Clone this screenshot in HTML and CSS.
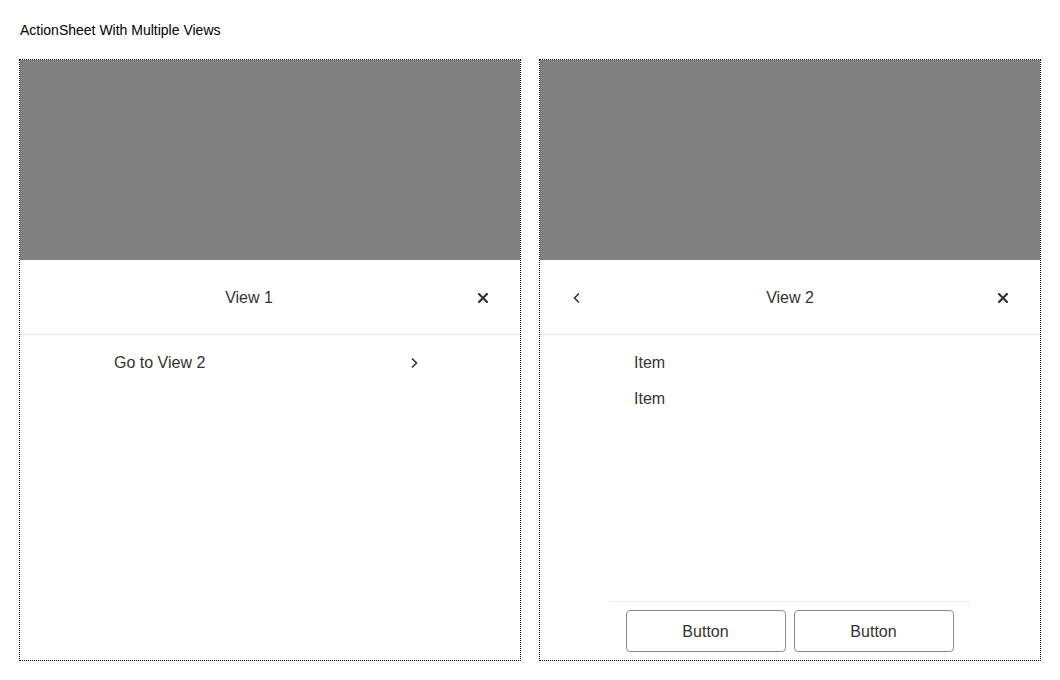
FILE: index.html
```html
<!DOCTYPE html>
<html>
<head>
<meta charset="utf-8">
<link rel="stylesheet" href="styles.css">
</head>
<body>
<div class="page">
  <div class="heading">ActionSheet With Multiple Views</div>
  <div class="panels">
    <div class="panel">
      <div class="backdrop"></div>
      <div class="sheet">
        <div class="sheet-header">
          <div class="title">View 1</div>
          <button class="icon-btn close" aria-label="Close">
            <svg width="10" height="10" viewBox="0 0 10 10"><path d="M1 1L9 9M9 1L1 9" stroke="#333" stroke-width="2.2" stroke-linecap="square"/></svg>
          </button>
        </div>
        <div class="sheet-body">
          <div class="list">
            <div class="row nav-row">
              <span>Go to View 2</span>
              <svg class="chev" width="8" height="12" viewBox="0 0 8 12"><path d="M2 1.5L6.5 6L2 10.5" fill="none" stroke="#333" stroke-width="1.6"/></svg>
            </div>
          </div>
        </div>
      </div>
    </div>
    <div class="panel">
      <div class="backdrop"></div>
      <div class="sheet">
        <div class="sheet-header">
          <button class="icon-btn back" aria-label="Back">
            <svg width="8" height="12" viewBox="0 0 8 12"><path d="M6 1.5L1.5 6L6 10.5" fill="none" stroke="#333" stroke-width="1.6"/></svg>
          </button>
          <div class="title">View 2</div>
          <button class="icon-btn close" aria-label="Close">
            <svg width="10" height="10" viewBox="0 0 10 10"><path d="M1 1L9 9M9 1L1 9" stroke="#333" stroke-width="2.2" stroke-linecap="square"/></svg>
          </button>
        </div>
        <div class="sheet-body">
          <div class="list">
            <div class="row">Item</div>
            <div class="row">Item</div>
          </div>
        </div>
        <div class="sheet-footer">
          <div class="footer-inner">
            <button class="btn">Button</button>
            <button class="btn">Button</button>
          </div>
        </div>
      </div>
    </div>
  </div>
</div>
</body>
</html>
```
FILE: styles.css
```css
* { box-sizing: border-box; }
html, body { margin: 0; padding: 0; background: #fff; }
body { font-family: "Liberation Sans", Arial, sans-serif; color: #333; }
.page { padding: 21px 19px 0 19px; }
.heading { font-size: 14px; color: #000; line-height: 18px; height: 38px; padding-left: 1px; }
.panels { display: flex; gap: 18px; }
.panel {
  width: 502px; height: 602px;
  border: 1px dotted #000;
  display: flex; flex-direction: column;
}
.backdrop { height: 200px; background: #808080; flex: none; }
.sheet { flex: 1; display: flex; flex-direction: column; background: #fff; }
.sheet-header {
  height: 75px; flex: none;
  display: flex; align-items: center;
  padding: 1px 16px 0;
  border-bottom: 1px solid #e6e6e6;
}
.title { flex: 1; text-align: center; font-size: 16px; line-height: 20px; color: #333; padding-top: 1px; }
.icon-btn {
  width: 42px; height: 42px; border: none; background: none; padding: 0;
  display: flex; align-items: center; justify-content: center; flex: none;
}
.sheet-body { flex: 1; }
.list { width: 360px; margin: 0 auto; padding-top: 10px; }
.row {
  height: 36px; display: flex; align-items: center; padding: 0 24px;
  font-size: 16px; color: #333;
}
.nav-row { justify-content: space-between; padding-right: 32px; }
.sheet-footer { flex: none; }
.footer-inner {
  width: 361px; margin: 0 auto;
  border-top: 1px solid #ececec;
  padding: 8px 16px;
  display: flex; gap: 8px;
}
.btn {
  width: 160px; height: 42px;
  border: 1px solid #8a8a96; border-radius: 4px;
  background: #fff; color: #333;
  font-family: "Liberation Sans", Arial, sans-serif; font-size: 16px;
  padding: 2px 0 0;
}
```
